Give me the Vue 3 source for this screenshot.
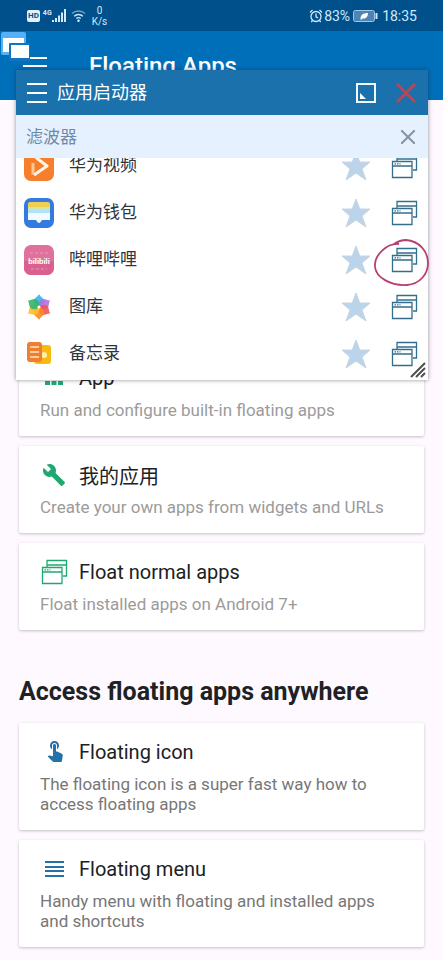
<template>
  <div class="page">
    <div class="status">
      <span class="hd">HD</span>
      <span class="net">4G</span>
      <svg class="signal" viewBox="0 0 15 13" width="15" height="13" fill="currentColor">
        <path d="M0 11h2v2H0zM3 9h2v4H3zM6 6.500h2V13H6zM9 3.500h2V13H9zM12 0h2v13h-2z" />
      </svg>
      <svg class="wifi" viewBox="0 0 15 13" width="15" height="13" fill="none" stroke="currentColor" stroke-width="1.400">
        <path d="M1 4.500a9.500 9.500 0 0 1 13 0" opacity=".55" />
        <path d="M3.200 7.200a6.200 6.200 0 0 1 8.600 0M5.300 9.600a3.300 3.300 0 0 1 4.400 0" />
        <circle cx="7.500" cy="11.700" r=".6" fill="currentColor" />
      </svg>
      <span class="speed">0<br />K/s</span>
      <span class="grow"></span>
      <svg class="alarm" viewBox="0 0 14 14" width="14" height="14" fill="none" stroke="currentColor" stroke-width="1.300">
        <circle cx="7" cy="7.500" r="5" />
        <path d="M7 4.500v3.300l2 1M1 3.500L3.500 1M13 3.500L10.500 1M3.500 11.500L2.300 13M10.500 11.500l1.200 1.500" />
      </svg>
      <span>83%</span>
      <svg class="battery" viewBox="0 0 25 12" width="25" height="12">
        <rect x=".5" y=".5" width="21" height="11" rx="2" fill="#4f83b3" stroke="#a5c6e2" />
        <path d="M23.500 3v6" stroke="#cfe4f5" stroke-width="2" />
        <path d="M7.500 9c0-4 2.500-6 7.500-6 0 4-2.500 6-5.500 5.500L8 10z" fill="#fff" />
      </svg>
      <span>18:35</span>
    </div>

    <header class="appbar">
      <button class="plain" type="button" aria-label="Menu">
        <svg viewBox="0 0 24 18" width="24" height="18" stroke="#fff" stroke-width="2">
          <path d="M0 1h24M0 9h24M0 17h24" />
        </svg>
      </button>
      <h1>Floating Apps</h1>
    </header>

    <main>
      <section class="cards">
        <a v-for="c in builtin" :key="c.title" class="card" href="#">
          <span class="cardTitle">
            <CardIcon :name="c.icon" />
            {{ c.title }}
          </span>
          <span class="desc">{{ c.desc }}</span>
        </a>
      </section>

      <h2>Access floating apps anywhere</h2>

      <section class="cards dark">
        <a v-for="c in access" :key="c.title" class="card" href="#">
          <span class="cardTitle">
            <CardIcon :name="c.icon" />
            {{ c.title }}
          </span>
          <span class="desc">{{ c.desc }}</span>
        </a>
      </section>
    </main>

    <button class="bubble plain" type="button" aria-label="Floating Apps">
      <svg viewBox="0 0 30 30" width="30" height="30">
        <rect x="1" y="1" width="25" height="23" rx="2" fill="#56b0f5" />
        <rect x="3" y="7" width="21" height="14" fill="#fff" />
        <rect x="9" y="12" width="21" height="18" rx="1" fill="#1074c0" />
        <rect x="11" y="14" width="18" height="13" fill="#fff" />
      </svg>
    </button>

    <div class="window">
      <div class="winHead">
        <button class="plain" type="button" aria-label="Menu">
          <svg viewBox="0 0 20 20" width="20" height="20" stroke="#fff" stroke-width="2">
            <path d="M0 1h20M0 10h20M0 19h20" />
          </svg>
        </button>
        <span class="winTitle">应用启动器</span>
        <button class="plain" type="button" aria-label="Maximize">
          <svg viewBox="0 0 20 20" width="20" height="20">
            <rect x="1" y="1" width="18" height="18" fill="none" stroke="#eefaff" stroke-width="2" />
            <path d="M4 10v6h6z" fill="#fff" />
          </svg>
        </button>
        <button class="plain" type="button" aria-label="Close">
          <svg viewBox="0 0 20 20" width="20" height="20" stroke="#b5475b" stroke-width="3">
            <path d="M1 1l18 18M19 1L1 19" />
          </svg>
        </button>
      </div>

      <div class="filter">
        <input v-model.trim="filter" type="text" placeholder="滤波器" aria-label="滤波器" />
        <button class="plain" type="button" aria-label="Clear" @click="filter = ''">
          <svg viewBox="0 0 14 14" width="14" height="14" stroke="#8593a3" stroke-width="2">
            <path d="M0 0l14 14M14 0L0 14" />
          </svg>
        </button>
      </div>

      <div class="listWrap">
        <ul class="list">
          <li v-for="a in shown" :key="a.icon">
            <svg class="appIcon" viewBox="0 0 32 32" width="32" height="32">
              <template v-if="a.icon === 'video'">
                <rect x="1" y="1" width="30" height="30" rx="7" fill="#f77f2c" />
                <path d="M10 13v11.500" fill="none" stroke="#ffc698" stroke-width="3" />
                <path d="M13 7.500l11 8.500-13 9" fill="none" stroke="#fff4e8" stroke-width="3" stroke-linejoin="round" />
              </template>
              <template v-else-if="a.icon === 'wallet'">
                <rect x="1" y="1" width="30" height="30" rx="7" fill="#347bdf" />
                <path d="M5 7a2 2 0 0 1 2-2h18a2 2 0 0 1 2 2v5H5z" fill="#efcf4f" />
                <path d="M5 10h22v4H5z" fill="#cfe6ae" />
                <path d="M5 13h22v4H5z" fill="#b2e2f8" />
                <path d="M5 16h22v7h-7.500c-1.500 0-1.500 3-3.500 3s-2-3-3.500-3H5z" fill="#f4fbff" />
              </template>
              <template v-else-if="a.icon === 'bilibili'">
                <rect x="1" y="1" width="30" height="30" rx="7" fill="#e0719c" />
                <path d="M1 17h30v7a7 7 0 0 1-7 7H8a7 7 0 0 1-7-7z" fill="#d9608f" />
                <path d="M7 9h18M8 25h16" stroke="#ec9bbb" stroke-dasharray="3 2" />
                <text class="logoText" x="16" y="20" text-anchor="middle">bilibili</text>
              </template>
              <template v-else-if="a.icon === 'gallery'">
                <path
                  v-for="(color, i) in petals"
                  :key="color"
                  d="M16 16.500c-4-2-6.500-5-4.500-8.500C13 6 15 5.500 16 3c1 2.500 3 3 4.500 5 2 3.500-.5 6.500-4.500 8.500z"
                  :fill="color"
                  opacity=".9"
                  :transform="`rotate(${i * 60} 16 16)`"
                />
                <circle cx="16" cy="16" r="1.500" fill="#fff" />
              </template>
              <template v-else>
                <rect x="11" y="7" width="17" height="19" rx="3" fill="#f9b913" />
                <circle cx="21" cy="17" r="3" fill="#fff0ab" />
                <rect x="4" y="4" width="15" height="20" rx="3" fill="#ed7f2e" />
                <path d="M7 9h9M7 14h9M7 19h9" stroke="#ffe3c5" stroke-width="1.500" />
              </template>
            </svg>
            <span class="appName">{{ a.name }}</span>
            <button class="plain star" type="button" :aria-label="'Favorite ' + a.name">
              <svg viewBox="0 0 30 30" width="30" height="30">
                <path
                  d="M15 1l3.800 10H29l-8 7 4 11-10-7-10 7 4-11-8-7h10.200z"
                  fill="#bad4ec"
                  stroke="#c9d4dd"
                />
              </svg>
            </button>
            <button class="plain float" type="button" :aria-label="'Float ' + a.name">
              <CardIcon name="windows" />
            </button>
          </li>
        </ul>
      </div>

      <svg class="ring" viewBox="0 0 56 50" width="56" height="50" fill="none" stroke="#b8406f" stroke-width="1.800">
        <path d="M26 6C14 5 1 17 2 29c1 10 15 19 32 18 13-1 21-11 21-22C55 13 46 3 33 2c-5 0-9 2-12 4" />
      </svg>

      <button class="plain resize" type="button" aria-label="Resize">
        <svg viewBox="0 0 16 16" width="16" height="16" stroke="#4f4f4f" stroke-width="2">
          <path d="M1 15L15 1M6 15l9-9M11 15l4-4" />
        </svg>
      </button>
    </div>
  </div>
</template>

<script setup>
import { computed, h, ref } from "vue";

const filter = ref("");

const apps = [
  { icon: "video", name: "华为视频" },
  { icon: "wallet", name: "华为钱包" },
  { icon: "bilibili", name: "哔哩哔哩" },
  { icon: "gallery", name: "图库" },
  { icon: "notes", name: "备忘录" },
];

const shown = computed(() => apps.filter(a => a.name.includes(filter.value)));

// clockwise, starting from the top
const petals = ["#35b4ee", "#b070e8", "#f0554c", "#f98a25", "#fbc02a", "#35b56b"];

const builtin = [
  { icon: "grid", title: "App", desc: "Run and configure built-in floating apps" },
  { icon: "wrench", title: "我的应用", desc: "Create your own apps from widgets and URLs" },
  { icon: "windows", title: "Float normal apps", desc: "Float installed apps on Android 7+" },
];

const access = [
  { icon: "touch", title: "Floating icon", desc: "The floating icon is a super fast way how to access floating apps" },
  { icon: "lines", title: "Floating menu", desc: "Handy menu with floating and installed apps and shortcuts" },
];

const line = { fill: "none", stroke: "currentColor", "stroke-width": 1.3 };

const shapes = {
  grid: [{ d: "M5 5h5v5H5zM11.500 5h5v5h-5zM18 5h5v5h-5zM5 11h5v5H5zM11.500 11h5v5h-5zM18 11h5v5h-5zM5 17h5v4H5zM11.500 17h5v4h-5zM18 17h5v4h-5z" }],
  wrench: [{
    d: "M22.700 19l-9.100-9.100c.9-2.300.4-5-1.500-6.900-2-2-5-2.400-7.400-1.300L9 6 6 9 1.600 4.700C.4 7.100.9 10.100 2.900 12.100c1.900 1.900 4.600 2.400 6.900 1.500l9.100 9.100c.4.4 1 .4 1.400 0l2.300-2.300c.5-.4.5-1.100.1-1.400z",
    transform: "translate(2 2)",
  }],
  windows: [
    { d: "M7 9V2.500h19.500V18H23M7 7h19.500", ...line },
    { d: "M2.500 9.500H22v16H2.500zM2.500 14H22", ...line },
    { d: "M4.500 11.800h6", ...line, "stroke-dasharray": "1.500 1" },
  ],
  touch: [{
    d: "M9 11.240V7.500C9 6.120 10.120 5 11.500 5S14 6.120 14 7.500v3.740c1.210-.81 2-2.180 2-3.740C16 5.010 13.990 3 11.500 3S7 5.010 7 7.500c0 1.560.79 2.930 2 3.740zm9.840 4.630l-4.540-2.260c-.17-.07-.35-.11-.54-.11H13v-6c0-.83-.67-1.500-1.500-1.500S10 6.670 10 7.500v10.740l-3.430-.72c-.08-.01-.15-.03-.24-.03-.31 0-.59.13-.79.33l-.79.8 4.940 4.940c.27.27.65.44 1.060.44h6.790c.75 0 1.330-.55 1.440-1.280l.75-5.270c.01-.07.02-.14.02-.2 0-.62-.38-1.160-.91-1.380z",
    transform: "translate(3 0)",
  }],
  lines: [{ d: "M5 6h19v2H5zM5 11h19v2H5zM5 15h19v2H5zM5 20h19v2H5z" }],
};

const CardIcon = ({ name }) =>
  h(
    "svg",
    { viewBox: "0 0 28 28", width: 28, height: 28, fill: "currentColor" },
    shapes[name].map(s => h("path", s))
  );
CardIcon.props = ["name"];
</script>

<style>
body { margin: 0; background: #fdf9fe; }
</style>

<style scoped>
.page {
  position: relative; min-height: 100vh;
  background: #fdf9fe; color: #202124;
  font-family: Roboto, "Noto Sans CJK SC", sans-serif;
}
.plain { display: flex; padding: 0; border: 0; background: none; cursor: pointer; }
.grow { flex: 1; }

.status {
  display: flex; align-items: center; box-sizing: border-box;
  height: 31px; padding: 0 26px 0 27px;
  background: #00508c; color: #d3e8f8; font-size: 14px;
}
.hd {
  padding: 0 1px; border-radius: 2px; background: #e3f1fb; color: #00508c;
  font-size: 8px; line-height: 12px; font-weight: 700;
}
.net { align-self: flex-start; margin: 9px 0 0 3px; font-size: 7px; line-height: 8px; font-weight: 700; }
.wifi { margin-left: 4px; }
.speed { margin-left: 6px; font-size: 10px; line-height: 11px; text-align: center; }
.alarm { margin-right: 1px; }
.battery { margin: 0 4px 0 3px; }

.appbar {
  display: flex; align-items: center; gap: 42px; box-sizing: border-box;
  height: 69px; padding: 0 23px; background: #006fb9;
}
.appbar h1 { margin: 0; color: #fff; font-size: 24px; line-height: 32px; font-weight: 500; }

/* the launcher window floats over the upper part of the page */
main { padding: 249px 19px 13px; }
.cards { display: grid; gap: 10px; color: #1fa971; }
.cards.dark { color: #2471a8; }
.card {
  display: block; padding: 16px 21px; border-radius: 2px;
  background: #fff; color: inherit; text-decoration: none;
  box-shadow: 0 1px 3px rgba(60, 40, 70, .28);
}
.cardTitle { display: flex; align-items: center; height: 26px; color: #202124; font-size: 20px; }
.cardTitle svg { margin-right: 11px; color: #1fa971; }
.dark .cardTitle svg { color: #2471a8; }
.desc { display: block; margin-top: 9px; color: #9b9b9b; font-size: 17px; line-height: 20px; }
.dark .desc { color: #777; }
h2 { margin: 46px 0 15px; font-size: 25px; line-height: 32px; font-weight: 700; }

.bubble { position: absolute; left: 0; top: 31px; }

.window {
  position: absolute; top: 70px; left: 16px; right: 15px;
  background: #fff; box-shadow: 0 0 4px rgba(30, 30, 50, .5);
}
.winHead {
  display: flex; align-items: center; gap: 20px; box-sizing: border-box;
  height: 45px; padding: 0 12px 0 11px; background: #1a71ac;
}
.winTitle { flex: 1; margin-left: -10px; color: #fff; font-size: 18px; line-height: 24px; }
.filter {
  display: flex; align-items: center; box-sizing: border-box;
  height: 43px; padding: 0 13px 0 10px; background: #e5f1fe;
}
.filter input {
  flex: 1; min-width: 0; padding: 0; border: 0; outline: 0; background: none;
  color: #202124; font: inherit; font-size: 17px; line-height: 24px;
}
.filter input::placeholder { color: #7188a6; opacity: 1; }

/* scrolled a little, so the first row is cut by the filter bar */
.listWrap { overflow: hidden; }
.list { margin: -16px 0 0; padding: 0 0 3px; list-style: none; }
.list li { display: flex; align-items: center; height: 47px; padding: 0 10px 0 7px; }
.appName { flex: 1; margin-left: 14px; padding-bottom: 2px; color: #30343b; font-size: 17px; line-height: 24px; }
.logoText { fill: #fff; font-size: 8px; font-weight: 700; }
.float { margin-left: 19px; color: #336f8d; }

.ring { position: absolute; top: 168px; right: -1px; pointer-events: none; }
.resize { position: absolute; right: 2px; bottom: 2px; }
</style>
